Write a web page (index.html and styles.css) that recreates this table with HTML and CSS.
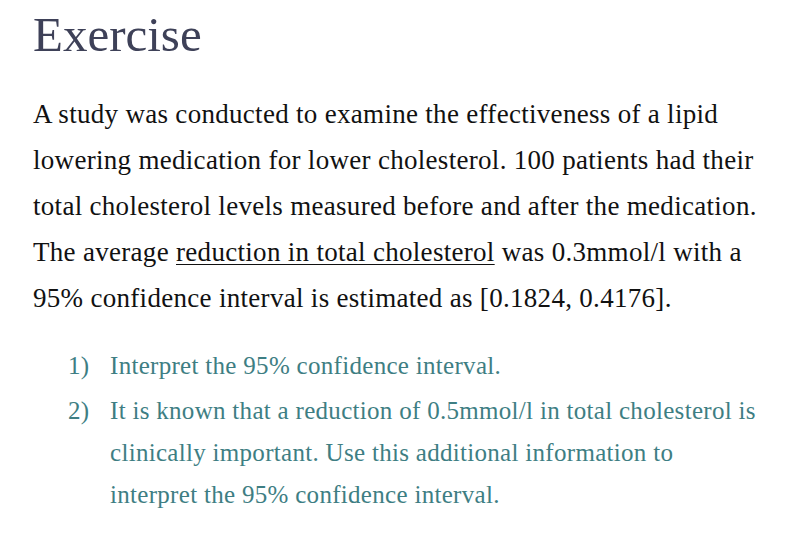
FILE: index.html
```html
<!DOCTYPE html>
<html lang="en">
<head>
<meta charset="utf-8">
<title>Exercise</title>
<link rel="stylesheet" href="styles.css">
</head>
<body>
<main class="page">
  <h1 class="title">Exercise</h1>
  <p class="intro">A study was conducted to examine the effectiveness of a lipid<br>
  lowering medication for lower cholesterol. 100 patients had their<br>
  total cholesterol levels measured before and after the medication.<br>
  The average <span class="term">reduction in total cholesterol</span> was 0.3mmol/l with a<br>
  95% confidence interval is estimated as [0.1824, 0.4176].</p>
  <ol class="questions">
    <li class="question"><span class="num">1)</span><span class="qtext">Interpret the 95% confidence interval.</span></li>
    <li class="question"><span class="num">2)</span><span class="qtext">It is known that a reduction of 0.5mmol/l in total cholesterol is<br>
    clinically important. Use this additional information to<br>
    interpret the 95% confidence interval.</span></li>
  </ol>
</main>
</body>
</html>
```

FILE: styles.css
```css
html, body {
  margin: 0;
  padding: 0;
  background: #ffffff;
}

.page {
  padding: 5px 0 0 33px;
  font-family: "Liberation Serif", "Times New Roman", serif;
}

.title {
  margin: 0;
  font-size: 49px;
  line-height: 60px;
  font-weight: normal;
  color: #3e4158;
}

.intro {
  margin: 26px 0 0 0;
  font-size: 27px;
  line-height: 46px;
  letter-spacing: 0.3px;
  color: #111111;
  white-space: nowrap;
}

.term {
  text-decoration: underline;
  text-decoration-thickness: 1px;
  text-underline-offset: 3px;
}

.questions {
  list-style: none;
  margin: 24px 0 0 0;
  padding: 0 0 0 35px;
  font-size: 25px;
  line-height: 42px;
  letter-spacing: 0.3px;
  color: #3e7e83;
}

.question {
  display: flex;
}

.question + .question {
  margin-top: 3px;
}

.num {
  flex: 0 0 42px;
}

.qtext {
  white-space: nowrap;
}
```
